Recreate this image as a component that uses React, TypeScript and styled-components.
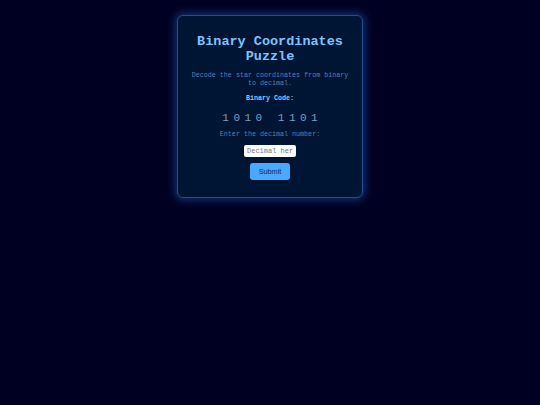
import React from "react";
import styled, { createGlobalStyle } from "styled-components";

const Global = createGlobalStyle`
  html, body { margin: 0; padding: 0; background: #000022; }
  body { font-family: "Liberation Mono", "Courier New", monospace; }
`;

const Page = styled.div`
  min-height: 405px;
  display: flex;
  justify-content: center;
  align-items: flex-start;
  padding-top: 15px;
  box-sizing: border-box;
`;

const Card = styled.div`
  width: 186px;
  box-sizing: border-box;
  background: #001433;
  border: 1px solid #1f4f8f;
  border-radius: 6px;
  box-shadow: 0 0 8px 2px rgba(40, 110, 220, 0.45);
  padding: 18px 12px 17px;
  display: flex;
  flex-direction: column;
  align-items: center;
  text-align: center;
`;

const Title = styled.h1`
  margin: 0;
  font-family: "Liberation Mono", "Courier New", monospace;
  font-size: 13.5px;
  line-height: 15px;
  font-weight: bold;
  color: #7cc4ff;
`;

const Text = styled.p<{ $mt: number; $bold?: boolean; $color?: string }>`
  margin: ${(p) => p.$mt}px 0 0;
  font-size: 6.7px;
  line-height: 8px;
  font-weight: ${(p) => (p.$bold ? "bold" : "normal")};
  color: ${(p) => p.$color || "#5a80b0"};
`;

const Digits = styled.div`
  margin-top: 10px;
  font-size: 11px;
  line-height: 12px;
  letter-spacing: 4.5px;
  padding-left: 4.5px;
  color: #7f9cc0;
  white-space: pre;
`;

const Input = styled.input`
  margin-top: 7px;
  width: 52px;
  height: 12px;
  box-sizing: border-box;
  border: none;
  border-radius: 2px;
  padding: 0 3px;
  background: #ffffff;
  font-family: "Liberation Mono", "Courier New", monospace;
  font-size: 7px;
  color: #333;
  &::placeholder { color: #777; }
`;

const Button = styled.button`
  margin-top: 6px;
  width: 40px;
  height: 17px;
  border: none;
  border-radius: 3px;
  background: #4aa8ff;
  color: #0a2a55;
  font-family: "Liberation Sans", Arial, sans-serif;
  font-size: 7.3px;
  padding: 0;
  cursor: pointer;
`;

export default function App() {
  return (
    <>
      <Global />
      <Page>
        <Card>
          <Title>Binary Coordinates Puzzle</Title>
          <Text $mt={7}>Decode the star coordinates from binary to decimal.</Text>
          <Text $mt={7} $bold $color="#8cc8ff">Binary Code:</Text>
          <Digits>1010 1101</Digits>
          <Text $mt={6}>Enter the decimal number:</Text>
          <Input placeholder="Decimal here" />
          <Button>Submit</Button>
        </Card>
      </Page>
    </>
  );
}
